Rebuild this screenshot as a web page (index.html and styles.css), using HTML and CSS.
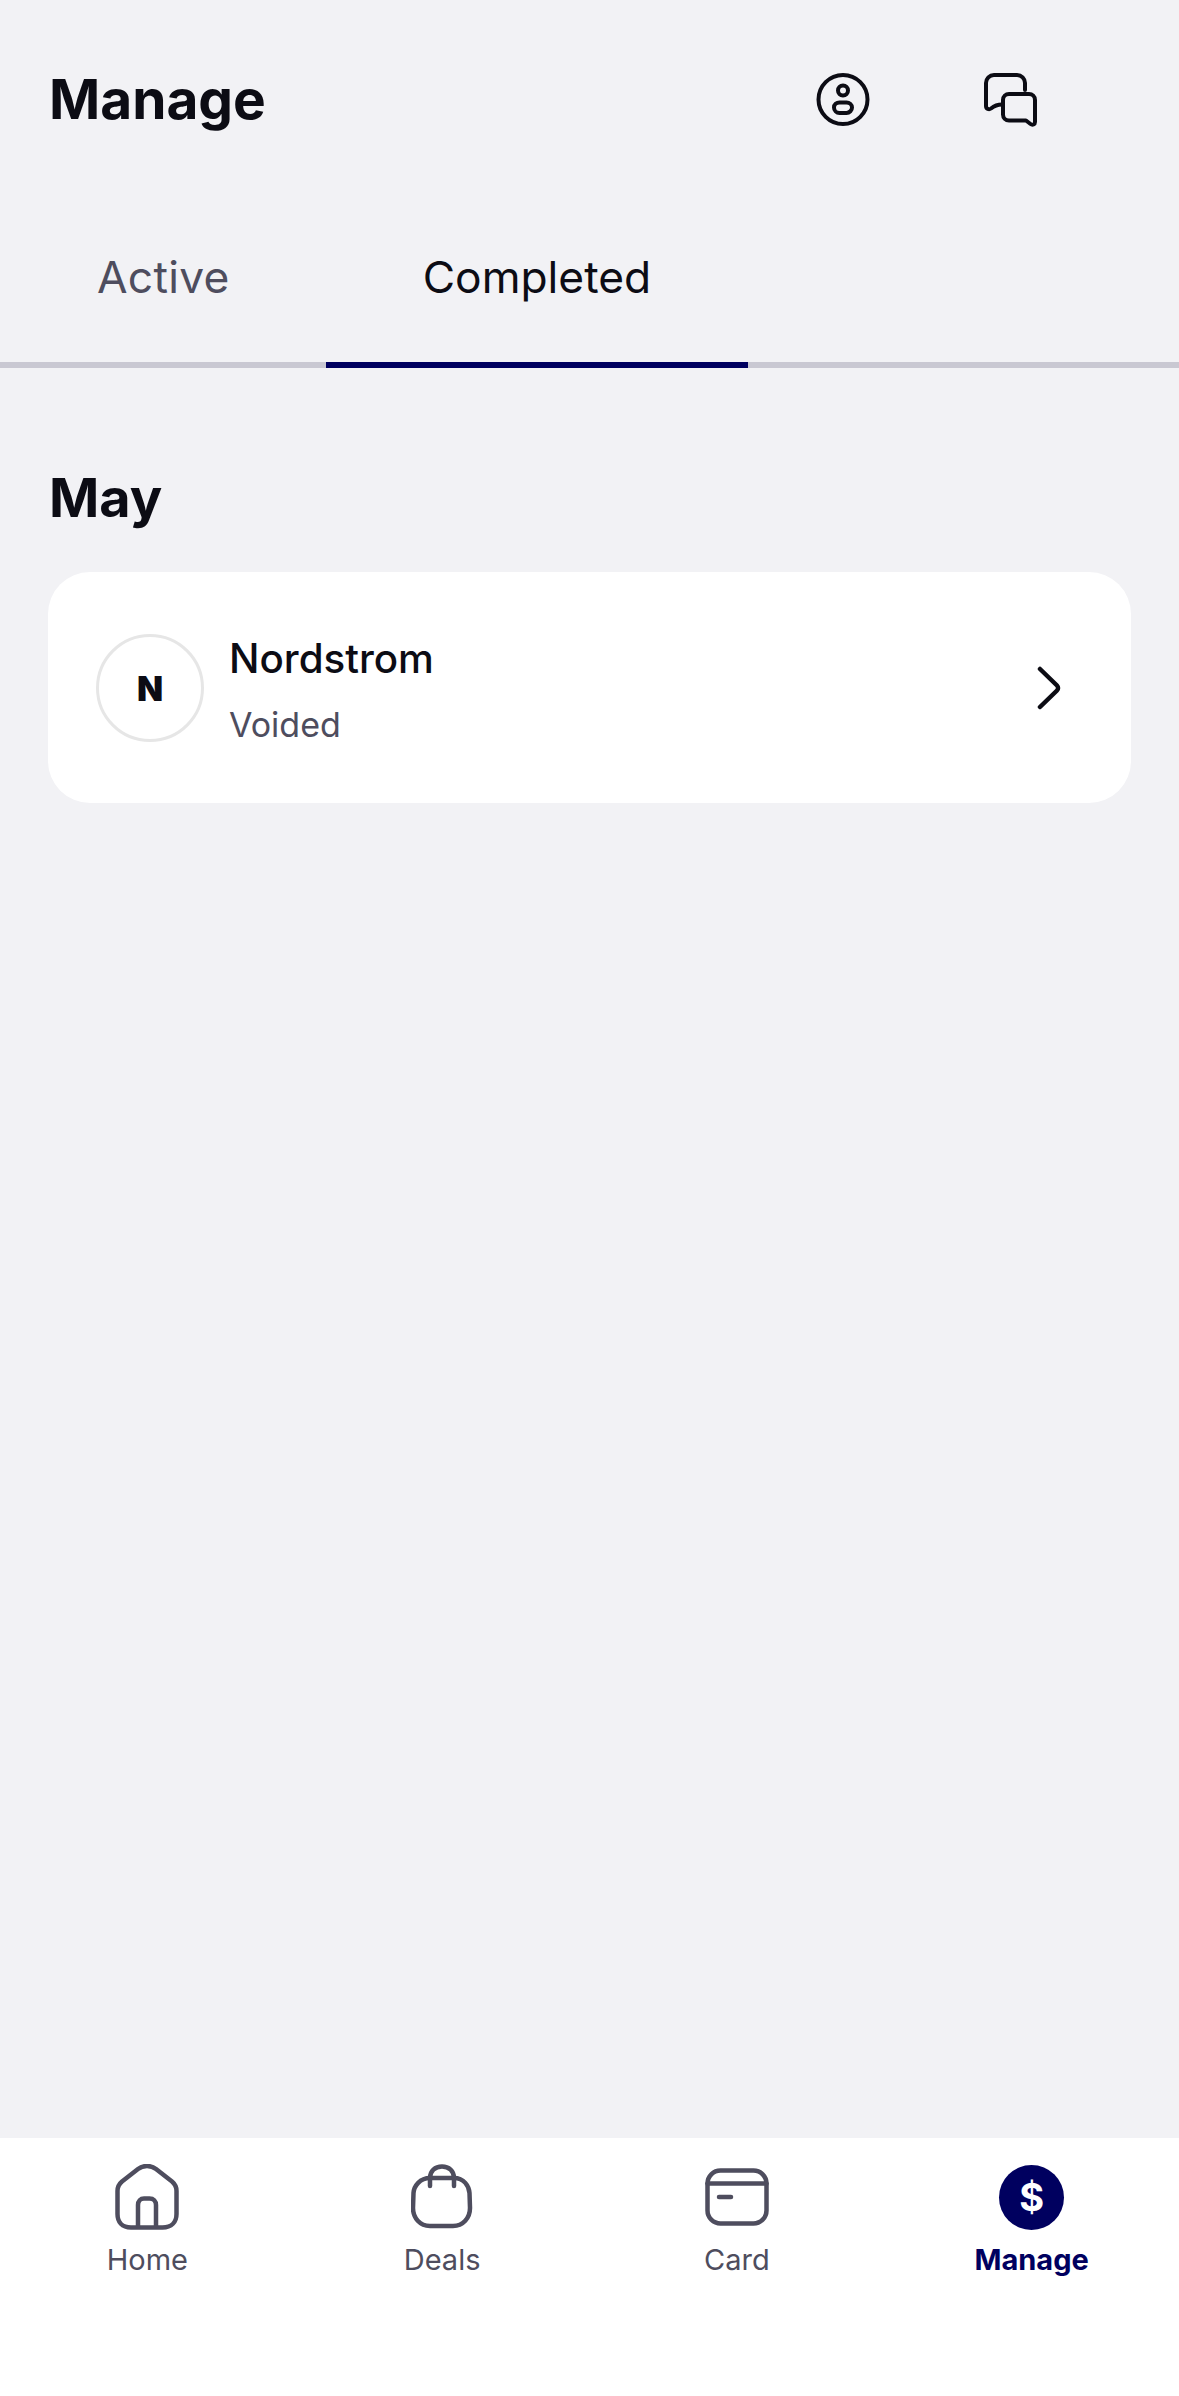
FILE: index.html
```html
<!DOCTYPE html>
<html lang="en">
<head>
    <meta charset="UTF-8">
    <meta name="viewport" content="width=device-width, initial-scale=1">
    <title>Manage</title>
    <link rel="stylesheet" href="styles.css">
</head>
<body>
    <header class="top-bar">
        <h1 class="page-title">Manage</h1>
        <div class="top-actions">
            <svg class="top-icon" viewBox="0 0 54 54" fill="none" stroke="#0c0c14" stroke-width="4">
                <circle cx="27" cy="26.5" r="24.5"/>
                <circle cx="27" cy="17.5" r="5"/>
                <path d="M23.500 29.500h7c3 0 5.500 2.300 5.500 5s-2.500 5.500-5.500 5.500h-7c-3 0-5.500-2.500-5.500-5.500s2.500-5 5.500-5z"/>
            </svg>
            <svg class="top-icon" viewBox="0 0 54 54" fill="none" stroke="#0c0c14" stroke-width="4" stroke-linecap="round" stroke-linejoin="round">
                <path d="M41 17V10a8 8 0 0 0-8-8H10a8 8 0 0 0-8 8v23c0 3 3 4 5 2.500 3-2.500 6-4 11-4"/>
                <path d="M26 21h19a6 6 0 0 1 6 6v22c0 2.500-2.500 3.500-4.500 2l-4.500-3.500H25a6 6 0 0 1-6-6V27a6 6 0 0 1 6-6z"/>
            </svg>
        </div>
    </header>

    <nav class="tabs">
        <div class="tab">Active</div>
        <div class="tab tab-on">Completed</div>
    </nav>

    <main class="content">
        <h2 class="month">May</h2>
        <div class="card">
            <div class="avatar">N</div>
            <div class="card-text">
                <div class="card-name">Nordstrom</div>
                <div class="card-status">Voided</div>
            </div>
            <svg class="chevron" viewBox="0 0 24 44" fill="none" stroke="#0c0c14" stroke-width="4.500" stroke-linecap="round" stroke-linejoin="round">
                <path d="M3 3l17 16.500a3.500 3.500 0 0 1 0 5L3 41"/>
            </svg>
        </div>
    </main>

    <footer class="bottom-nav">
        <div class="nav-item">
            <div class="nav-icon">
                <svg width="64" height="66" viewBox="0 0 64 66" fill="none" stroke="#4e4d5e" stroke-width="4.500" stroke-linejoin="round">
                    <path d="M2.500 27c0-4 1.500-7 4.500-9.500L23 5c5-4 13-4 18 0l16 12.500c3 2.500 4.500 5.500 4.500 9.500v23c0 8-5 13.500-14 13.500H16C7 63.500 2.500 58 2.500 50z"/>
                    <path d="M23 63.500V41c0-4 2.500-6.500 6-6.500h5.500c4 0 6.500 2.500 6.500 6.500v22.500"/>
                </svg>
            </div>
            <div class="nav-label">Home</div>
        </div>
        <div class="nav-item">
            <div class="nav-icon">
                <svg width="62" height="66" viewBox="0 0 62 66" fill="none" stroke="#4e4d5e" stroke-width="4.500" stroke-linecap="round" stroke-linejoin="round">
                    <path d="M19 14h24c10 0 15 8 15.500 15l.5 15c0 10-7 18-17 18H19C9 62 2 54 2 44l.5-15C3 22 9 14 19 14z"/>
                    <path d="M19 22v-8C19 7 24 2.500 31 2.500S43 7 43 14v8"/>
                </svg>
            </div>
            <div class="nav-label">Deals</div>
        </div>
        <div class="nav-item">
            <div class="nav-icon">
                <svg width="64" height="58" viewBox="0 0 64 58" fill="none" stroke="#4e4d5e" stroke-width="4.500" stroke-linecap="round">
                    <rect x="2.500" y="2.500" width="59" height="53" rx="13"/>
                    <path d="M2.500 15.500h59"/>
                    <path d="M14 29h12"/>
                </svg>
            </div>
            <div class="nav-label">Card</div>
        </div>
        <div class="nav-item nav-item-on">
            <div class="nav-icon">
                <div class="dollar">$</div>
            </div>
            <div class="nav-label">Manage</div>
        </div>
    </footer>
</body>
</html>
```

FILE: styles.css
```css
html,
body {
    width: 100%;
    height: 100%;
    margin: 0;
}

body {
    display: flex;
    flex-direction: column;
    background-color: #f2f2f5;
    color: #0c0c14;
    font-family: "Inter", "Noto Sans", sans-serif;
    overflow: hidden;
}

.top-bar {
    display: flex;
    align-items: center;
    justify-content: space-between;
    height: 100px;
    padding: 50px 141px 0 49px;
}

.page-title {
    margin: 0;
    padding-bottom: 3px;
    font-size: 55px;
    font-weight: 700;
}

.top-actions {
    display: flex;
    gap: 114px;
}

.top-icon {
    width: 54px;
    height: 54px;
}

.tabs {
    display: flex;
    height: 118px;
    margin-top: 94px;
    border-bottom: 6px solid #c9c8d2;
}

.tab {
    padding: 0 96px 0 97px;
    height: 118px;
    line-height: 66px;
    font-size: 44.300px;
    letter-spacing: 0.300px;
    color: #4e4d5e;
}

.tab-on {
    padding: 0 97px;
    letter-spacing: 0;
    color: #0c0c14;
    border-bottom: 6px solid #00005f;
}

.content {
    flex: 1;
    padding: 0 48px;
}

.month {
    margin: 100px 0 0;
    height: 104px;
    line-height: 60px;
    font-size: 54px;
    font-weight: 700;
    padding-left: 1px;
}

.card {
    display: flex;
    align-items: center;
    height: 231px;
    padding: 0 70px 0 48px;
    background-color: #fff;
    border-radius: 42px;
}

.avatar {
    display: flex;
    align-items: center;
    justify-content: center;
    width: 108px;
    height: 108px;
    padding-top: 2px;
    box-sizing: border-box;
    border: 3px solid #e6e6e6;
    border-radius: 50%;
    font-size: 34px;
    font-weight: 900;
}

.card-text {
    flex: 1;
    margin-left: 25px;
    padding-top: 5px;
}

.card-name {
    font-size: 40.300px;
    font-weight: 500;
    line-height: 50px;
}

.card-status {
    margin-top: 20px;
    font-size: 34px;
    line-height: 42px;
    color: #4e4d5e;
}

.chevron {
    width: 24px;
    height: 44px;
}

.bottom-nav {
    display: flex;
    height: 258px;
    background-color: #fff;
}

.nav-item {
    flex: 1;
    padding-top: 26px;
    text-align: center;
}

.nav-icon {
    display: flex;
    align-items: center;
    justify-content: center;
    height: 66px;
}

.nav-label {
    margin-top: 12px;
    font-size: 29px;
    line-height: 36px;
    color: #4e4d5e;
}

.nav-item-on .nav-label {
    color: #00005f;
    font-weight: 700;
}

.dollar {
    width: 65px;
    height: 65px;
    line-height: 65px;
    border-radius: 50%;
    background-color: #00005f;
    color: #fff;
    font-size: 38px;
    font-weight: 700;
}
```
